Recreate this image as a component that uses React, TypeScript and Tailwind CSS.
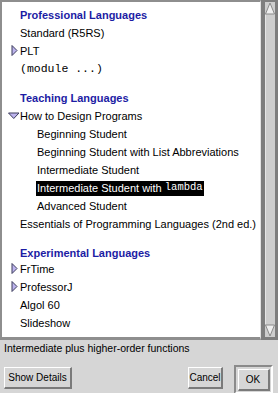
import React from "react";

const sans = { fontFamily: '"Liberation Sans", Arial, sans-serif' } as const;

function RightTri() {
  return (
    <svg width="12" height="18" viewBox="0 0 12 18" className="shrink-0">
      <polygon points="4,3.5 9,8.5 4,13.5" fill="#bdb4ee" stroke="#3c3c5c" strokeWidth="1" />
    </svg>
  );
}

function DownTri() {
  return (
    <svg width="12" height="18" viewBox="0 0 12 18" className="shrink-0">
      <polygon points="0.5,6 11,6 5.75,11.5" fill="#bdb4ee" stroke="#3c3c5c" strokeWidth="1" />
    </svg>
  );
}

function Heading({ children, className = "" }: { children: React.ReactNode; className?: string }) {
  return (
    <div className={"flex items-center pl-[18px] font-bold text-[11px] text-[#1c1ca4] " + className}>
      {children}
    </div>
  );
}

function Item({ children, indent = 18 }: { children: React.ReactNode; indent?: number }) {
  return (
    <div
      className={
        "h-[18px] flex items-center text-[11px] text-black whitespace-nowrap " +
        (indent === 35 ? "pl-[35px]" : "pl-[18px]")
      }
    >
      {children}
    </div>
  );
}

function TriItem({ children, down = false }: { children: React.ReactNode; down?: boolean }) {
  return (
    <div className="h-[18px] flex items-center pl-[6px] text-[11px] text-black whitespace-nowrap">
      {down ? <DownTri /> : <RightTri />}
      <span>{children}</span>
    </div>
  );
}

function Button({ children, className = "" }: { children: React.ReactNode; className?: string }) {
  return (
    <div
      className={
        "h-[22px] flex items-center justify-center bg-[#d6d6d6] border-t border-l border-t-white border-l-white border-b-2 border-r-2 border-b-[#7a7a7a] border-r-[#7a7a7a] text-[10px] text-black " +
        className
      }
    >
      {children}
    </div>
  );
}

export default function App() {
  return (
    <div className="w-[278px] h-[393px] bg-[#d6d6d6] flex flex-col overflow-hidden" style={sans}>
      <div className="flex h-[340px] shrink-0">
        <div className="w-[261px] bg-white border-t-2 border-l-2 border-b-[3px] border-[#8e8e8e] border-r border-r-[#e4e4e4] pt-[5px]">
          <Heading className="h-[17px]">Professional Languages</Heading>
          <Item>Standard (R5RS)</Item>
          <TriItem>PLT</TriItem>
          <Item>
            <span className="text-[11.5px]" style={{ fontFamily: '"Liberation Mono", "Courier New", monospace' }}>
              (module ...)
            </span>
          </Item>
          <Heading className="h-[17px] mt-[12px]">Teaching Languages</Heading>
          <TriItem down>How to Design Programs</TriItem>
          <Item indent={35}>Beginning Student</Item>
          <Item indent={35}>Beginning Student with List Abbreviations</Item>
          <Item indent={35}>Intermediate Student</Item>
          <div className="h-[18px] flex items-center pl-[34px] text-[11px] whitespace-nowrap">
            <span className="h-[15px] flex items-center bg-black text-white px-[1px]">
              Intermediate Student with&nbsp;
              <span className="text-[10.5px]" style={{ fontFamily: '"Liberation Mono", "Courier New", monospace' }}>
                lambda
              </span>
            </span>
          </div>
          <Item indent={35}>Advanced Student</Item>
          <Item>Essentials of Programming Languages (2nd ed.)</Item>
          <Heading className="h-[16px] mt-[11px] pt-[2px]">Experimental Languages</Heading>
          <TriItem>FrTime</TriItem>
          <TriItem>ProfessorJ</TriItem>
          <Item>Algol 60</Item>
          <Item>Slideshow</Item>
        </div>
        <div className="w-[17px] flex flex-col border-t-2 border-l-4 border-r-[3px] border-b-[3px] border-[#7e7e7e] bg-[#cecece]">
          <svg width="10" height="13" viewBox="0 0 10 13" className="shrink-0">
            <polygon points="5,1 9.5,12 0.5,12" fill="#eeeeee" stroke="#8a8a8a" strokeWidth="1" />
          </svg>
          <div className="flex-1 border-l border-l-[#e6e6e6]" />
          <svg width="10" height="13" viewBox="0 0 10 13" className="shrink-0">
            <polygon points="0.5,1 9.5,1 5,12" fill="#eeeeee" stroke="#8a8a8a" strokeWidth="1" />
          </svg>
        </div>
      </div>
      <div className="h-[18px] flex items-center pl-[4px] pt-[1px] text-[10.5px] text-black whitespace-nowrap">
        Intermediate plus higher-order functions
      </div>
      <div className="flex items-start justify-between mt-[8px] pl-[4px] pr-[5px]">
        <Button className="w-[68px] mt-[2px]">Show Details</Button>
        <div className="flex items-start gap-[11px]">
          <Button className="w-[35px] mt-[2px]">Cancel</Button>
          <div className="w-[39px] h-[29px] border-t-2 border-l-2 border-t-[#8a8a8a] border-l-[#8a8a8a] border-b-2 border-r-2 border-b-white border-r-white flex justify-center pt-[2px]">
            <Button className="w-[32px]">OK</Button>
          </div>
        </div>
      </div>
    </div>
  );
}
